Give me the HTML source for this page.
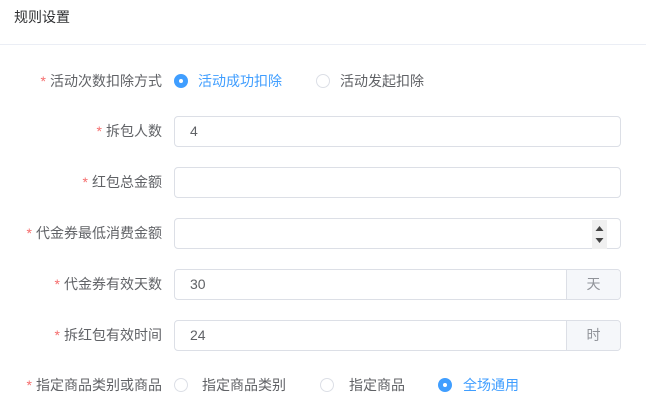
<!DOCTYPE html>
<html><head><meta charset="utf-8"><style>
*{margin:0;padding:0;box-sizing:border-box}
body{width:646px;height:415px;background:#fff;font-family:"Liberation Sans","Noto Sans CJK SC",sans-serif;font-size:14px;color:#606266;position:relative;overflow:hidden}
.a{position:absolute;white-space:nowrap}
.hd{left:14px;top:8px;font-size:14px;color:#303133;line-height:18px}
.line{left:0;top:44px;width:646px;height:1px;background:#ebeef5}
.lab{right:484px;line-height:16px}
.lab b{color:#f56c6c;font-weight:normal;margin-right:4px}
.inp{left:174px;width:447px;height:31px;border:1px solid #dcdfe6;border-radius:4px;line-height:29px;padding-left:15px;color:#606266}
.add{position:absolute;right:0;top:0;width:54px;height:29px;background:#f5f7fa;border-left:1px solid #dcdfe6;text-align:center;color:#909399;border-radius:0 3px 3px 0}
.r{width:14px;height:14px;border:1px solid #dcdfe6;border-radius:50%;background:#fff}
.r.on{background:#409eff;border-color:#409eff}
.r.on:after{content:"";position:absolute;left:4px;top:4px;width:4px;height:4px;border-radius:50%;background:#fff}
.t{line-height:16px}
.blue{color:#409eff}
.spin{position:absolute;left:417px;top:1px;width:15px;height:29px;background:#f0f0f0}
</style></head><body>
<div class="a hd">规则设置</div>
<div class="a line"></div>

<div class="a lab" style="top:73px"><b>*</b>活动次数扣除方式</div>
<div class="a r on" style="left:174px;top:74px"></div>
<div class="a t blue" style="left:198px;top:73px">活动成功扣除</div>
<div class="a r" style="left:316px;top:74px"></div>
<div class="a t" style="left:340px;top:73px">活动发起扣除</div>

<div class="a lab" style="top:123px"><b>*</b>拆包人数</div>
<div class="a inp" style="top:116px">4</div>

<div class="a lab" style="top:174px"><b>*</b>红包总金额</div>
<div class="a inp" style="top:167px"></div>

<div class="a lab" style="top:225px"><b>*</b>代金券最低消费金额</div>
<div class="a inp" style="top:218px"><div class="spin">
<svg width="15" height="29" viewBox="0 0 15 29"><path d="M3.5 11L7.5 6L11.5 11Z" fill="#444"/><path d="M3.5 18L7.5 23L11.5 18Z" fill="#444"/></svg></div></div>

<div class="a lab" style="top:276px"><b>*</b>代金券有效天数</div>
<div class="a inp" style="top:269px">30<div class="add">天</div></div>

<div class="a lab" style="top:327px"><b>*</b>拆红包有效时间</div>
<div class="a inp" style="top:320px">24<div class="add">时</div></div>

<div class="a lab" style="top:377px"><b>*</b>指定商品类别或商品</div>
<div class="a r" style="left:174px;top:378px"></div>
<div class="a t" style="left:202px;top:377px">指定商品类别</div>
<div class="a r" style="left:320px;top:378px"></div>
<div class="a t" style="left:349px;top:377px">指定商品</div>
<div class="a r on" style="left:438px;top:378px"></div>
<div class="a t blue" style="left:463px;top:377px">全场通用</div>
</body></html>
